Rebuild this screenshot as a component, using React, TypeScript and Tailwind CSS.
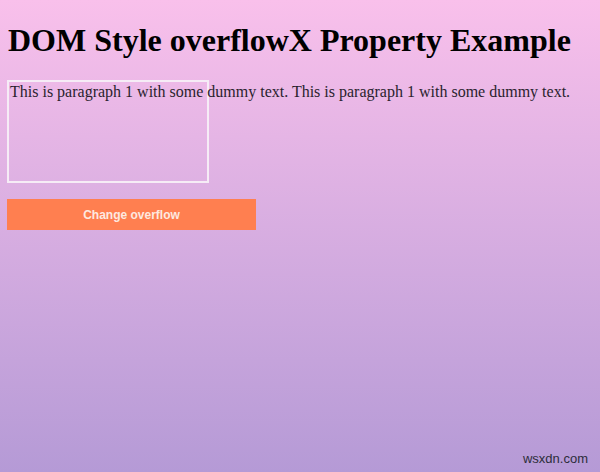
export default function App() {
  return (
    <div className="relative min-h-[472px] bg-gradient-to-b from-[#f9c0eb] to-[#b59ad6] px-[7px] pt-[1px] font-['Liberation_Serif',serif] text-black">
      <h1 className="my-[21px] pl-[1px] text-[32px] font-bold leading-[37px]">DOM Style overflowX Property Example</h1>
      <div className="h-[103px] w-[202px] border-2 border-[#f6ecf6] pl-[1px] text-[16px] leading-[19px] whitespace-nowrap text-[#2a1f2e]">
        This is paragraph 1 with some dummy text. This is paragraph 1 with some dummy text.
      </div>
      <button className="mt-[16px] h-[31px] w-[249px] bg-[#ff7f50] font-['Liberation_Sans',sans-serif] text-[12px] font-bold text-[#fde9e0]">
        Change overflow
      </button>
      <span className="absolute bottom-[4px] right-[12px] font-['Liberation_Sans',sans-serif] text-[13px] text-[#2d2d3a]">wsxdn.com</span>
    </div>
  );
}
